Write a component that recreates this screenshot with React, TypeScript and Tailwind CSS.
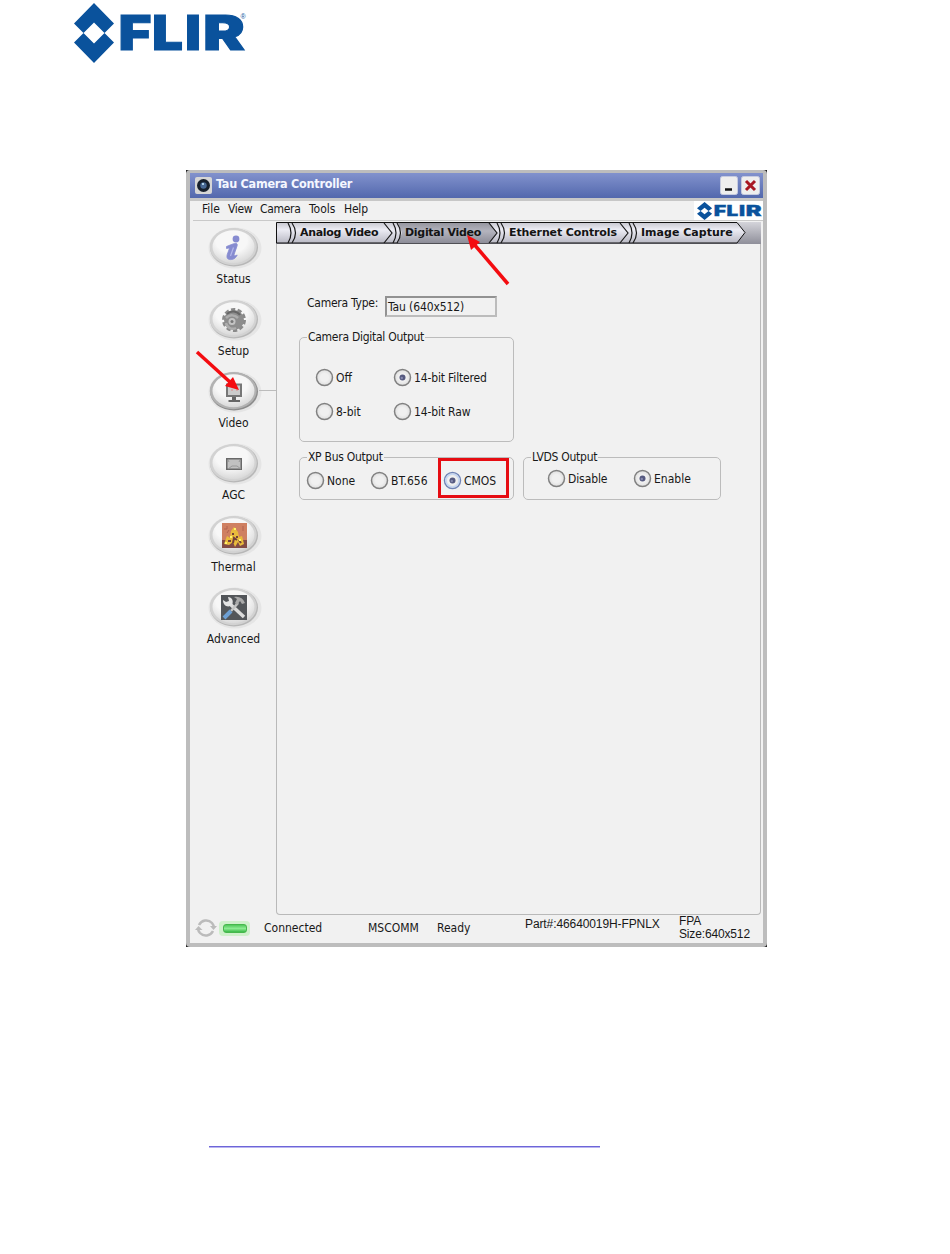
import React from "react";

type SideIcon = "status" | "setup" | "video" | "agc" | "thermal" | "advanced";

function FlirLogo({ className, registered }: { className: string; registered?: boolean }) {
  return (
    <svg viewBox="0 0 172 60" preserveAspectRatio="none" className={className} fill="#0a529c">
      <path d="M20 0 40 20.500 30.500 30 20 19.500 9.500 30 0 20.500Z" />
      <path d="M20 60 40 39.500 30.500 30 20 40.500 9.500 30 0 39.500Z" />
      <g fontFamily="Inter, 'Open Sans', sans-serif" fontWeight="900" fontSize="48.500" stroke="#0a529c" strokeWidth="1">
        <text x="44.500" y="46.700" textLength="33" lengthAdjust="spacingAndGlyphs">F</text>
        <text x="78" y="46.700" textLength="31" lengthAdjust="spacingAndGlyphs">L</text>
        <text x="111" y="46.700" textLength="16" lengthAdjust="spacingAndGlyphs">I</text>
        <text x="129" y="46.700" textLength="42" lengthAdjust="spacingAndGlyphs">R</text>
      </g>
      {registered && (
        <text x="166.500" y="16" fontSize="7" fontFamily="Liberation Sans, sans-serif">®</text>
      )}
    </svg>
  );
}

function Glyph({ kind }: { kind: SideIcon }) {
  switch (kind) {
    case "status":
      return (
        <g fill="#868bd0">
          <circle cx="30" cy="17" r="3.400" />
          <path d="M20.500 24.500c3-1 6-3 9.500-3 1.300 0 1.500 1.200 1 2.700l-2.800 8c-.6 2 .8 2 3 .8-1.500 3.500-4.500 5-7.800 4.500-2.800-.5-2.800-3-2-5.500l2.200-6c-1 0-2 .3-3.100.5Z" stroke="#868bd0" strokeWidth=".8" />
          <path d="m24.500 34 3-8.500" stroke="#b4b8ea" strokeWidth="1.200" fill="none" />
        </g>
      );
    case "setup":
      return (
        <g>
          <circle cx="28" cy="26" r="10.500" fill="none" stroke="#8a8a8a" strokeWidth="3" strokeDasharray="4.200 2.400" />
          <circle cx="28" cy="26" r="10" fill="#8d8d8d" />
          <path d="M21 20c4-4 10-3 13 1" stroke="#666" strokeWidth="2" fill="none" />
          <path d="M20 24c4-4 9-3 12 0M20 29c1 5 6 7 10 5" stroke="#adadad" strokeWidth="2.500" fill="none" />
          <circle cx="26" cy="27.500" r="3.500" fill="#c4c4c4" />
          <circle cx="26" cy="27.500" r="1.500" fill="#777" />
        </g>
      );
    case "video":
      return (
        <g>
          <rect x="21" y="18.500" width="14" height="11.500" fill="#ccc" stroke="#777" strokeWidth="2" />
          <path d="M25 24h2M30 24h2" stroke="#d88" />
          <path d="M28 31v3.500" stroke="#666" strokeWidth="4" />
          <path d="M22.500 35h11.500" stroke="#666" strokeWidth="2" />
        </g>
      );
    case "agc":
      return (
        <g>
          <rect x="20.750" y="20.750" width="14.500" height="10.500" fill="#c1c1c1" stroke="#696969" strokeWidth="1.500" />
          <path d="m22 31 4-3h5l4 3M22 22l1 2M34 22l-1 2" stroke="#999" fill="none" />
        </g>
      );
    case "thermal":
      return (
        <g>
          <rect x="16" y="13" width="25" height="25" fill="#cf8062" />
          <path d="M16 30h25v8H16Z" fill="#824b45" />
          <path d="m18 34 3-8 3 2 1-7 3-4 4 5 1 5 3-1 2 8-4 2-2-4-3 5-2-5-4 3Z" fill="#e9bb3c" />
          <path d="M26 24h2M30 27h2M27 33l1-5 3 2M22 31h3M35 33l-2-3" stroke="#754039" strokeWidth="2" fill="none" />
          <path d="M28 19h2M24 27h2M34 29v2M20 32v2" stroke="#fff36b" strokeWidth="2" />
          <path d="M18 19h3v-3M37 16v5M21 23l2-3" stroke="#b26350" fill="none" />
        </g>
      );
    case "advanced":
      return (
        <g>
          <rect x="15" y="13" width="26" height="25" fill="#53565a" />
          <path d="m24 22 14 13" stroke="#dcdcdc" strokeWidth="3.500" />
          <path d="m32 21-7 8" stroke="#c4c4c4" strokeWidth="2.500" />
          <path d="m25 29-7 7" stroke="#6d9fd3" strokeWidth="4" />
          <path d="M17 18c0 6 5 8 9 5 2-4 0-8-4-8l1 4-3 1Z" fill="#e4e4e4" />
          <path d="M28 15c5-1 9 1 11 6l-3 1-2-3-3 4-2-2 2-4Z" fill="#aaa" />
        </g>
      );
  }
}

function SideItem({ kind, label, active }: { kind: SideIcon; label: string; active?: boolean }) {
  return (
    <div className="flex h-[72px] w-[85px] flex-col items-center">
      <svg viewBox="0 0 56 46" className="h-[46px] w-[56px] shrink-0 overflow-visible">
        <ellipse cx="29" cy="26" rx="26.500" ry="20.500" fill="#e5e5e5" />
        <ellipse cx="28" cy="25.500" rx="24" ry="19" fill={active ? "#8b8b8b" : "#b7b7b7"} />
        <ellipse cx="27.300" cy="24.700" rx="23.500" ry="18.500" fill={active ? "#b2b2b2" : "#d2d2d2"} />
        <ellipse cx="27.500" cy="24.700" rx="21" ry="16.500" fill="url(#button-face)" />
        <Glyph kind={kind} />
        {active && <path d="M53 24.500h17" stroke="#bcbcbc" />}
      </svg>
      <span className="mt-[4px] leading-[15px]">{label}</span>
    </div>
  );
}

function Radio({ label, checked, blue, className }: { label: string; checked?: boolean; blue?: boolean; className: string }) {
  return (
    <div className={`flex h-[19px] shrink-0 items-center ${className}`}>
      <svg viewBox="0 0 19 19" className="h-[19px] w-[19px] shrink-0">
        <circle cx="9.500" cy="9.500" r="8" fill="url(#radio-face)" stroke={blue ? "#7184b5" : "#818181"} strokeWidth="1.500" />
        {blue && <circle cx="9.500" cy="9.500" r="6.500" fill="none" stroke="#c5d6f2" strokeWidth="1.500" />}
        {checked && <circle cx="9.500" cy="9.500" r="3" fill="#55597f" />}
        {checked && <circle cx="8.800" cy="10" r="1.200" fill="#8589ae" />}
      </svg>
      <span className="mt-[2px] ml-[2px] leading-[15px]">{label}</span>
    </div>
  );
}

function Group({ title, className, children }: { title: string; className: string; children: React.ReactNode }) {
  return (
    <fieldset className={`min-w-0 rounded-[5px] border border-[#bcbcbc] ${className}`}>
      <legend className="ml-[7px] h-[14px] px-px leading-[15px] tracking-[-0.27px]">{title}</legend>
      {children}
    </fieldset>
  );
}

function Tabs() {
  return (
    <div className="relative h-[22px] w-[485px]">
      <svg viewBox="0 0 485 22" className="absolute inset-0 h-[22px] w-[485px]">
        <rect width="485" height="22" fill="url(#tab-bar)" />
        <path d="M.5.500H461l8 10-8 10.500H.5Z" fill="url(#tab-face)" stroke="#111" />
        <path d="M122 1h92l7 10-7 10h-92l4-10Z" fill="url(#tab-active)" />
        <g fill="none" stroke="#181818" strokeWidth="1.200">
          <path d="M12 1q6 10 0 20M16 1q7 10 0 20" />
          <path d="M108 1l8 10-8 10M117 1q6 10 0 20M121 1q7 10 0 20" />
          <path d="M213 1l8 10-8 10M221 1q6 10 0 20M225 1q7 10 0 20" />
          <path d="M344 1l8 10-8 10M353 1q6 10 0 20M357 1q7 10 0 20" />
        </g>
      </svg>
      <div className="relative flex h-[22px] items-center pt-px font-['DejaVu_Sans'] text-[11px] font-bold text-[#141414]">
        <span className="ml-[24px] w-[105px] tracking-[-0.3px]">Analog Video</span>
        <span className="w-[104px] tracking-[-0.3px]">Digital Video</span>
        <span className="w-[132px] tracking-[-0.12px]">Ethernet Controls</span>
        <span className="tracking-[0.02px]">Image Capture</span>
      </div>
    </div>
  );
}

export default function App() {
  return (
    <div className="relative h-[1254px] w-[950px] overflow-hidden bg-white font-['DejaVu_Sans_Condensed','DejaVu_Sans',sans-serif] text-[12px] whitespace-nowrap text-[#181818]">
      <svg className="absolute h-0 w-0">
        <defs>
          <radialGradient id="button-face" cx=".45" cy=".3" r=".75">
            <stop offset=".5" stopColor="#f7f7f7" />
            <stop offset="1" stopColor="#d4d4d4" />
          </radialGradient>
          <radialGradient id="radio-face">
            <stop offset=".5" stopColor="#f0f0f0" />
            <stop offset="1" stopColor="#dedede" />
          </radialGradient>
          <linearGradient id="tab-face" x2="0" y2="1">
            <stop stopColor="#c8c8d0" />
            <stop offset=".35" stopColor="#ececf4" />
            <stop offset="1" stopColor="#b9b9c4" />
          </linearGradient>
          <linearGradient id="tab-active" x2="0" y2="1">
            <stop stopColor="#96969f" />
            <stop offset=".4" stopColor="#b4b4be" />
            <stop offset="1" stopColor="#8d8d98" />
          </linearGradient>
          <linearGradient id="tab-bar" x2="0" y2="1">
            <stop stopColor="#d4d4da" />
            <stop offset="1" stopColor="#8f8f9a" />
          </linearGradient>
        </defs>
      </svg>

      <header className="h-[170px] pt-[3px] pl-[74px]">
        <FlirLogo className="h-[60px] w-[172px] overflow-visible" registered />
      </header>

      <main className="ml-[186px] h-[777px] w-[581px] bg-[#202020]">
        <div className="flex h-full flex-col rounded-[4px] border-x-[4px] border-t-[3px] border-b-[4px] border-[#bdbdbd] bg-[#f1f1f1]">
          <div className="flex h-[25px] shrink-0 items-center bg-linear-to-b from-[#8292cd] to-[#5368ad] pr-[2px] pl-[5px]">
            <svg viewBox="0 0 17 17" className="h-[17px] w-[17px]">
              <rect width="17" height="17" rx="2" fill="#d6d6d6" />
              <circle cx="8.500" cy="8.500" r="6.500" fill="#17202d" />
              <circle cx="8.500" cy="8.500" r="3.200" fill="#486894" />
              <path d="M7 7h2" stroke="#aed1e8" strokeWidth="2" />
            </svg>
            <span className="-mt-[2px] ml-[4px] flex-1 text-[12.500px] font-bold tracking-[-0.25px] text-[#f5f7ff]">Tau Camera Controller</span>
            <svg viewBox="0 0 41 19" className="h-[19px] w-[41px]">
              <rect x=".5" y=".5" width="17" height="18" rx="2" fill="#eee" stroke="#c6cbe0" />
              <rect x="21.500" y=".5" width="18" height="18" rx="2" fill="#eee" stroke="#c6cbe0" />
              <path d="M5 13.500h7" stroke="#111" strokeWidth="2.500" />
              <path d="m26 5 9 9m0-9-9 9" stroke="#a81722" strokeWidth="3" />
            </svg>
          </div>
          <div className="h-[3px] shrink-0 bg-[#c7c7c7]" />
          <div className="ml-[3px] flex h-[20px] shrink-0 items-center border-b border-[#c9c9c9] pl-[9px]">
            <span className="-mt-[4px] w-[26px]">File</span>
            <span className="-mt-[4px] w-[32px] tracking-[-0.3px]">View</span>
            <span className="-mt-[4px] w-[49px] tracking-[-0.3px]">Camera</span>
            <span className="-mt-[4px] w-[35px]">Tools</span>
            <span className="-mt-[4px] tracking-[-0.2px]">Help</span>
            <div className="ml-auto flex h-[19px] items-center bg-white pr-[1px] pl-[3px]">
              <FlirLogo className="h-[18px] w-[65px] overflow-visible" />
            </div>
          </div>

          <div className="flex h-[694px] shrink-0">
            <nav className="flex w-[86px] shrink-0 flex-col pt-px pl-[1px]">
              <SideItem kind="status" label="Status" />
              <SideItem kind="setup" label="Setup" />
              <SideItem kind="video" label="Video" active />
              <SideItem kind="agc" label="AGC" />
              <SideItem kind="thermal" label="Thermal" />
              <SideItem kind="advanced" label="Advanced" />
            </nav>
            <section className="mt-px h-[693px] w-[485px] shrink-0 rounded-b-[4px] border-r border-b border-l border-[#b9b9b9]">
              <div className="-ml-px"><Tabs /></div>
              <div className="mt-[52px] ml-[30px] flex items-start">
                <span className="w-[78px] leading-[14px] tracking-[-0.25px]">Camera Type:</span>
                <div className="h-[21px] w-[112px] border-2 border-t-[#929292] border-r-[#bcbcbc] border-b-[#bcbcbc] border-l-[#929292] pl-[1px] leading-[18px] tracking-[-0.1px]">Tau (640x512)</div>
              </div>
              <Group title="Camera Digital Output" className="mt-[13px] ml-[22px] h-[112px] w-[215px]">
                <div className="mt-[24px] flex pl-[15px]">
                  <Radio label="Off" className="w-[78px]" />
                  <Radio label="14-bit Filtered" checked className="w-[110px] tracking-[-0.15px]" />
                </div>
                <div className="mt-[15px] flex pl-[15px]">
                  <Radio label="8-bit" className="w-[78px]" />
                  <Radio label="14-bit Raw" className="w-[110px] tracking-[-0.15px]" />
                </div>
              </Group>
              <div className="mt-[8px] ml-[22px] flex gap-[9px]">
                <Group title="XP Bus Output" className="h-[50px] w-[215px]">
                  <div className="mt-[7px] flex pl-[6px]">
                    <Radio label="None" className="w-[64px]" />
                    <Radio label="BT.656" className="w-[73px]" />
                    <Radio label="CMOS" checked blue className="w-[60px]" />
                  </div>
                </Group>
                <Group title="LVDS Output" className="h-[50px] w-[198px]">
                  <div className="mt-[5px] flex pl-[23px]">
                    <Radio label="Disable" className="w-[86px] tracking-[-0.1px]" />
                    <Radio label="Enable" checked className="w-[76px]" />
                  </div>
                </Group>
              </div>
            </section>
          </div>

          <footer className="flex flex-1 items-start pl-[5px]">
            <svg viewBox="0 0 22 22" className="mt-[2px] h-[22px] w-[22px]">
              <path d="M4 8a8 8 0 0 1 13-2M18 14a8 8 0 0 1-13 2M5 16a8 8 0 0 1-2-4M17 6a8 8 0 0 1 2 5" fill="none" stroke="#bbb" strokeWidth="2.500" />
              <path d="m15 9 7 0-3.500 4ZM0 13l3.500-4 4 4Z" fill="#bbb" />
            </svg>
            <div className="mt-[6px] ml-[2px] flex h-[15px] w-[31px] items-center justify-center rounded-[4px] bg-[#d0f0cc]">
              <div className="h-[9px] w-[24px] rounded-[3px] border border-[#46b74c] bg-linear-to-b from-[#4fc85a] via-[#8beb91] to-[#36b946]" />
            </div>
            <span className="mt-[6px] ml-[14px] w-[104px] leading-[15px]">Connected</span>
            <span className="mt-[6px] w-[69px] leading-[15px]">MSCOMM</span>
            <span className="mt-[6px] w-[88px] leading-[15px]">Ready</span>
            <span className="mt-[2px] w-[154px] font-['Liberation_Sans'] leading-[14px] tracking-[-0.1px]">Part#:46640019H-FPNLX</span>
            <span className="font-['Liberation_Sans'] leading-[13px] tracking-[-0.15px]">FPA<br />Size:640x512</span>
          </footer>
        </div>
      </main>

      <div className="mt-[199px] ml-[209px] h-[2px] w-[391px] border-t border-[#6d65d8] bg-[#bab5f1]" />

      <svg className="pointer-events-none absolute top-[225px] left-[190px] h-[280px] w-[330px]" viewBox="190 225 330 280">
        <g stroke="#f40c10" strokeWidth="3.500" fill="#f40c10">
          <path d="M508 284 473 243" />
          <path d="m467 235 13 7-9 8Z" stroke="none" />
          <path d="m197 352 34 31" />
          <path d="m239 390-14-4 8-9Z" stroke="none" />
        </g>
        <rect x="439.500" y="459.500" width="68" height="37" fill="none" stroke="#e60c12" strokeWidth="3" />
      </svg>
    </div>
  );
}
